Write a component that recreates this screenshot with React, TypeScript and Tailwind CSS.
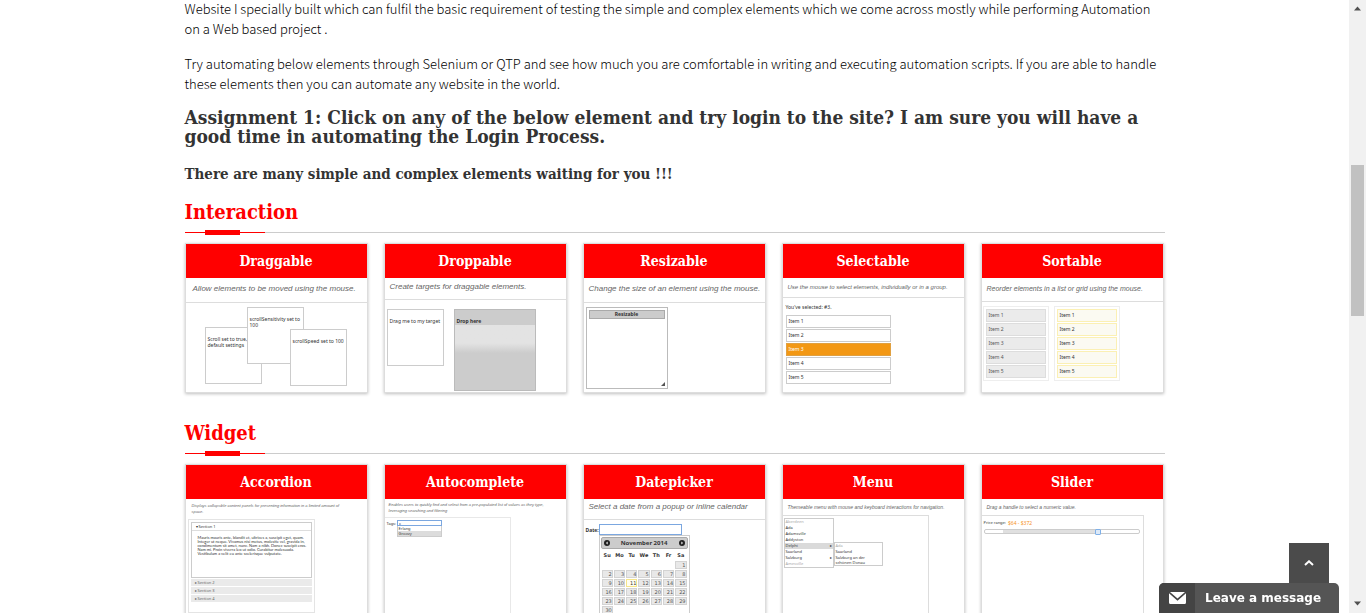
import type { ReactNode } from "react";

const serif = "font-['DejaVu_Serif_Condensed','DejaVu_Serif',serif]";

function SectionTitle({ children }: { children: ReactNode }) {
  return (
    <div>
      <h2 className={`${serif} text-[20px] leading-5 font-bold text-[#f00]`}>{children}</h2>
      <div className="mt-2 flex h-[5px] items-center">
        <span className="h-px w-5 bg-[#f00]" />
        <span className="h-[5px] w-[35px] bg-[#f00]" />
        <span className="h-px w-[25px] bg-[#f00]" />
        <span className="h-px flex-1 bg-[#ccc]" />
      </div>
    </div>
  );
}

type CardProps = {
  title: string;
  text: string;
  textClass: string;
  divider?: boolean;
  children: ReactNode;
};

function Card({ title, text, textClass, divider = true, children }: CardProps) {
  return (
    <article className="flex h-[150px] min-w-0 flex-col overflow-hidden border border-[#ddd] bg-white shadow-[0_1px_3px_rgba(0,0,0,0.25)]">
      <h3 className={`${serif} shrink-0 bg-[#f00] text-center text-[14px] leading-[34px] font-bold text-white`}>
        {title}
      </h3>
      <p
        className={`shrink-0 font-['Liberation_Sans',sans-serif] text-[#666] italic ${divider ? "border-b border-[#ddd]" : ""} ${textClass}`}
      >
        {text}
      </p>
      <div className="min-h-0 flex-1 font-['Noto_Sans',sans-serif] text-[5px] leading-[6px] text-[#333]">
        {children}
      </div>
    </article>
  );
}

function Draggable() {
  const box = "absolute size-[57px] border border-[#ccc] bg-white pt-2 pl-[2px]";
  return (
    <div className="relative h-full">
      <div className={`${box} top-6 left-[19px] whitespace-nowrap`}>
        Scroll set to true,
        <br />
        default settings
      </div>
      <div className={`${box} top-1 left-[61px]`}>scrollSensitivity set to 100</div>
      <div className={`${box} top-[26px] left-[104px] whitespace-nowrap`}>scrollSpeed set to 100</div>
    </div>
  );
}

function Droppable() {
  return (
    <div className="flex items-start gap-[10px] pt-[9px] pl-[2px]">
      <div className="size-[57px] border border-[#ccc] pt-2 pl-[2px] whitespace-nowrap">Drag me to my target</div>
      <div className="h-[82px] w-[82px] border border-[#bbb] bg-[#ccc]">
        <div className="h-[15px] pt-2 pl-[2px] font-bold">Drop here</div>
        <div className="h-7 bg-linear-to-b from-[#e3e3e3] from-65% to-[#ccc]" />
      </div>
    </div>
  );
}

function Resizable() {
  return (
    <div className="pt-1 pl-[2px]">
      <div className="flex h-[82px] w-[82px] flex-col justify-between border border-[#bbb] p-[2px]">
        <div className="h-[9px] border border-[#aaa] bg-[#ccc] text-center font-bold">Resizable</div>
        <svg className="size-1 self-end" viewBox="0 0 4 4">
          <path d="M4 0V4H0Z" fill="#555" />
        </svg>
      </div>
    </div>
  );
}

function Selectable() {
  return (
    <div className="pt-[6px] pl-[3px]">
      <p className="pb-[5px]">You've selected: #3.</p>
      <ul className="flex w-[105px] flex-col gap-px">
        {[1, 2, 3, 4, 5].map((n) => (
          <li
            key={n}
            className={
              n === 3
                ? "h-[13px] border border-[#e0a040] bg-[#f39814] pl-[2px] leading-[11px] text-white"
                : "h-[13px] border border-[#ccc] pl-[2px] leading-[11px]"
            }
          >
            Item {n}
          </li>
        ))}
      </ul>
    </div>
  );
}

function Sortable() {
  const items = [1, 2, 3, 4, 5];
  return (
    <div className="flex gap-[5px] pt-1 pl-px">
      <ul className="flex w-[66px] flex-col gap-px border border-[#eee] p-[2px]">
        {items.map((n) => (
          <li key={n} className="h-[13px] border border-[#ddd] bg-[#ebebeb] pl-[2px] leading-[11px] text-[#555]">
            Item {n}
          </li>
        ))}
      </ul>
      <ul className="flex w-[66px] flex-col gap-px border border-[#eee] p-[2px]">
        {items.map((n) => (
          <li key={n} className="h-[13px] border border-[#fbf0b4] bg-[#fbfaf2] pl-[2px] leading-[11px]">
            Item {n}
          </li>
        ))}
      </ul>
    </div>
  );
}

function Accordion() {
  return (
    <div className="ml-[2px] flex h-full w-[127px] flex-col gap-px border border-[#e4e4e4] p-[2px] text-[4px] leading-[7px]">
      <div className="border border-[#ccc]">
        <div className="h-2 border-b border-[#ddd] pl-1">▾ Section 1</div>
        <p className="h-[46px] pt-[5px] pl-[6px] font-[Lato,sans-serif] leading-1 whitespace-nowrap">
          Mauris mauris ante, blandit et, ultrices a, suscipit eget, quam.
          <br />
          Integer ut neque. Vivamus nisi metus, molestie vel, gravida in,
          <br />
          condimentum sit amet, nunc. Nam a nibh. Donec suscipit eros.
          <br />
          Nam mi. Proin viverra leo ut odio. Curabitur malesuada.
          <br />
          Vestibulum a velit eu ante scelerisque vulputate.
        </p>
      </div>
      {[2, 3, 4].map((n) => (
        <div key={n} className="h-[7px] bg-[#eaeaea] pl-1 text-[#666]">
          ▸ Section {n}
        </div>
      ))}
    </div>
  );
}

function Autocomplete() {
  return (
    <div className="h-full w-[126px] border-t border-r border-[#e8e8e8] pt-[2px] pl-[2px] text-[4px] leading-[5px]">
      <label className="flex items-center">
        <span className="w-[10px]">Tags:</span>
        <input
          type="text"
          defaultValue="o"
          className="h-[6px] w-[45px] border border-[#7ba7e0] pl-px text-[4px] leading-1 outline-none"
        />
      </label>
      <ul className="ml-[10px] w-[45px] border border-t-0 border-[#ccc]">
        <li className="pl-px">Erlang</li>
        <li className="bg-[#dcdcdc] pl-px">Groovy</li>
      </ul>
    </div>
  );
}

const weeks = [
  ["", "", "", "", "", "", 1],
  [2, 3, 4, 5, 6, 7, 8],
  [9, 10, 11, 12, 13, 14, 15],
  [16, 17, 18, 19, 20, 21, 22],
  [23, 24, 25, 26, 27, 28, 29],
  [30, "", "", "", "", "", ""],
];

function Arrow({ flip = false }: { flip?: boolean }) {
  return (
    <svg className="size-[6px]" viewBox="0 0 6 6">
      <circle cx="3" cy="3" r="3" fill="#222" />
      <path d={flip ? "M2.4 1.6L4 3L2.4 4.4Z" : "M3.6 1.6L2 3L3.6 4.4Z"} fill="#fff" />
    </svg>
  );
}

function Datepicker() {
  return (
    <div className="pt-1 pl-[2px]">
      <label className="flex items-center">
        <span className="w-[13px] font-bold">Date:</span>
        <input type="text" className="h-[11px] w-[83px] border border-[#7ba7e0] outline-none" />
      </label>
      <div className="ml-[13px] w-[91px] border border-[#ccc] p-px font-['DejaVu_Sans',sans-serif]">
        <div className="flex h-3 items-center justify-between rounded-[2px] border border-[#aaa] bg-[#ccc] px-[2px] text-[6px] font-bold">
          <Arrow />
          <span className="font-['Noto_Sans',sans-serif]">November 2014</span>
          <Arrow flip />
        </div>
        <table className="w-full table-fixed border-separate border-spacing-px">
          <thead>
            <tr>
              {["Su", "Mo", "Tu", "We", "Th", "Fr", "Sa"].map((d) => (
                <th key={d} className="h-[10px] p-0 text-center leading-[10px]">
                  {d}
                </th>
              ))}
            </tr>
          </thead>
          <tbody>
            {weeks.map((week, i) => (
              <tr key={i}>
                {week.map((d, j) => (
                  <td
                    key={j}
                    className={
                      d === ""
                        ? "p-0"
                        : d === 11
                          ? "h-2 border border-[#f5e58a] bg-[#fffef0] p-0 text-right leading-[6px]"
                          : "h-2 border border-[#d3d3d3] bg-[#e8e8e8] p-0 text-right leading-[6px] text-[#555]"
                    }
                  >
                    {d}
                  </td>
                ))}
              </tr>
            ))}
          </tbody>
        </table>
      </div>
    </div>
  );
}

function Menu() {
  const cities = ["Aberdeen", "Ada", "Adamsville", "Addyston", "Delphi", "Saarland", "Salzburg", "Amesville"];
  return (
    <div className="flex h-full w-[146px] items-start border-t border-r border-[#ddd] pt-[2px] pl-px text-[4px]">
      <ul className="w-[50px] border border-[#ccc]">
        {cities.map((c) => (
          <li
            key={c}
            className={`flex justify-between px-px ${c === "Delphi" ? "bg-[#dadada]" : ""} ${c === "Aberdeen" || c === "Amesville" ? "text-[#aaa]" : ""}`}
          >
            <span>{c}</span>
            {(c === "Delphi" || c === "Salzburg") && <span>▸</span>}
          </li>
        ))}
      </ul>
      <ul className="mt-6 w-[49px] border border-[#ccc] pl-px">
        <li className="text-[#aaa]">Ada</li>
        <li>Saarland</li>
        <li className="leading-[5px]">
          Salzburg an der
          <br />
          schönen Donau
        </li>
      </ul>
    </div>
  );
}

function Slider() {
  return (
    <div className="h-full w-[162px] border-t border-r border-[#ddd] pt-1 pl-[2px] text-[4px]">
      <label htmlFor="price" className="flex items-center gap-[2px]">
        Price range: <span className="text-[5px] text-[#f6931f]">$64 - $372</span>
      </label>
      <input
        id="price"
        type="range"
        min={0}
        max={500}
        defaultValue={372}
        className="mt-[3px] block h-[5px] w-[156px] appearance-none rounded-[2px] border border-[#ccc] bg-[linear-gradient(to_right,#fff_12%,#e0e0e0_12%,#e0e0e0_74%,#fff_74%)] [&::-webkit-slider-thumb]:h-[6px] [&::-webkit-slider-thumb]:w-[6px] [&::-webkit-slider-thumb]:appearance-none [&::-webkit-slider-thumb]:rounded-[1px] [&::-webkit-slider-thumb]:border [&::-webkit-slider-thumb]:border-[#7fb0e8] [&::-webkit-slider-thumb]:bg-[#dce9f8]"
      />
    </div>
  );
}

export default function App() {
  return (
    <div className="flex h-screen overflow-hidden bg-white text-[#333]">
      <main className="min-w-0 flex-1">
        <div className="mx-auto w-full max-w-[980px]">
          <div className="-mt-px flex flex-col gap-[15px] font-['Noto_Sans_CJK_SC',sans-serif] text-[13px] leading-5 font-light text-black lg:whitespace-nowrap">
            <p>
              Website I specially built which can fulfil the basic requirement of testing the simple and complex
              elements which we come across mostly while performing Automation <br className="hidden lg:inline" />
              on a Web based project .
            </p>
            <p>
              Try automating below elements through Selenium or QTP and see how much you are comfortable in writing and
              executing automation scripts. If you are able to handle <br className="hidden lg:inline" />
              these elements then you can automate any website in the world.
            </p>
          </div>
          <h1 className={`${serif} mt-[14px] text-[19px] leading-[19px] font-bold`}>
            Assignment 1: Click on any of the below element and try login to the site? I am sure you will have a good
            time in automating the Login Process.
          </h1>
          <h2 className={`${serif} mt-[18px] mb-[18px] text-[15px] leading-5 font-bold`}>
            There are many simple and complex elements waiting for you !!!
          </h2>

          <section>
            <SectionTitle>Interaction</SectionTitle>
            <div className="mt-2 grid grid-cols-5 gap-4 pr-px">
              <Card title="Draggable" text="Allow elements to be moved using the mouse." textClass="h-[25px] pl-[7px] text-[8px] leading-[22px]">
                <Draggable />
              </Card>
              <Card title="Droppable" text="Create targets for draggable elements." textClass="h-[22px] pl-[5px] text-[8px] leading-[18px]">
                <Droppable />
              </Card>
              <Card title="Resizable" text="Change the size of an element using the mouse." textClass="h-[25px] pl-[5px] text-[8px] leading-[22px]">
                <Resizable />
              </Card>
              <Card title="Selectable" text="Use the mouse to select elements, individually or in a group." textClass="h-5 pl-[5px] text-[6px] leading-[18px]">
                <Selectable />
              </Card>
              <Card title="Sortable" text="Reorder elements in a list or grid using the mouse." textClass="h-6 pl-[5px] text-[7px] leading-[22px]">
                <Sortable />
              </Card>
            </div>
          </section>

          <section className="mt-[30px]">
            <SectionTitle>Widget</SectionTitle>
            <div className="mt-2 grid grid-cols-5 gap-4 pr-px">
              <Card title="Accordion" divider={false} text="Displays collapsible content panels for presenting information in a limited amount of space." textClass="h-5 pt-1 pr-5 pl-[6px] text-[4px] leading-[6px]">
                <Accordion />
              </Card>
              <Card title="Autocomplete" divider={false} text="Enables users to quickly find and select from a pre-populated list of values as they type, leveraging searching and filtering" textClass="h-[18px] pt-[3px] pr-1 pl-1 text-[4px] leading-[6px]">
                <Autocomplete />
              </Card>
              <Card title="Datepicker" text="Select a date from a popup or inline calendar" textClass="h-[21px] pl-[5px] text-[8px] leading-4">
                <Datepicker />
              </Card>
              <Card title="Menu" divider={false} text="Themeable menu with mouse and keyboard interactions for navigation." textClass="h-4 pl-[5px] text-[5px] leading-4">
                <Menu />
              </Card>
              <Card title="Slider" divider={false} text="Drag a handle to select a numeric value." textClass="h-4 pl-[5px] text-[5px] leading-4">
                <Slider />
              </Card>
            </div>
          </section>
        </div>
      </main>

      <div className="flex w-[17px] shrink-0 flex-col items-center bg-[#f1f1f1]" aria-hidden="true">
        <svg className="mt-[6px] h-[5px] w-[7px]" viewBox="0 0 7 5">
          <path d="M0 4.5L3.5 0.5L7 4.5Z" fill="#505050" />
        </svg>
        <div className="flex flex-1 flex-col pt-[154px]">
          <div className="h-[151px] w-[13px] bg-[#c1c1c1]" />
        </div>
        <svg className="mb-[7px] h-[5px] w-[7px]" viewBox="0 0 7 5">
          <path d="M0 0.5L3.5 4.5L7 0.5Z" fill="#505050" />
        </svg>
      </div>

      <div className="fixed right-[27px] bottom-0 flex w-[180px] flex-col">
        <button type="button" aria-label="Back to top" className="mr-[10px] flex size-10 items-center justify-center self-end bg-[#4b4b4b]">
          <svg className="h-[6px] w-[10px]" viewBox="0 0 10 6" fill="none" stroke="#fff" strokeWidth="2">
            <path d="M1 5L5 1.3L9 5" />
          </svg>
        </button>
        <button
          type="button"
          className="flex h-[30px] items-stretch overflow-hidden rounded-t-[5px] bg-[#555] font-['DejaVu_Sans',sans-serif] text-[12px] font-bold text-white"
        >
          <span className="flex w-9 items-center justify-center bg-[#444]">
            <svg className="h-3 w-[17px]" viewBox="0 0 17 12">
              <path d="M1 0H16L8.5 6.5Z" fill="#fff" />
              <path d="M0 1.3L8.5 8.8L17 1.3V10.5Q17 12 15.5 12H1.5Q0 12 0 10.5Z" fill="#fff" />
            </svg>
          </span>
          <span className="flex-1 self-center pl-[10px] text-left">Leave a message</span>
        </button>
      </div>
    </div>
  );
}
